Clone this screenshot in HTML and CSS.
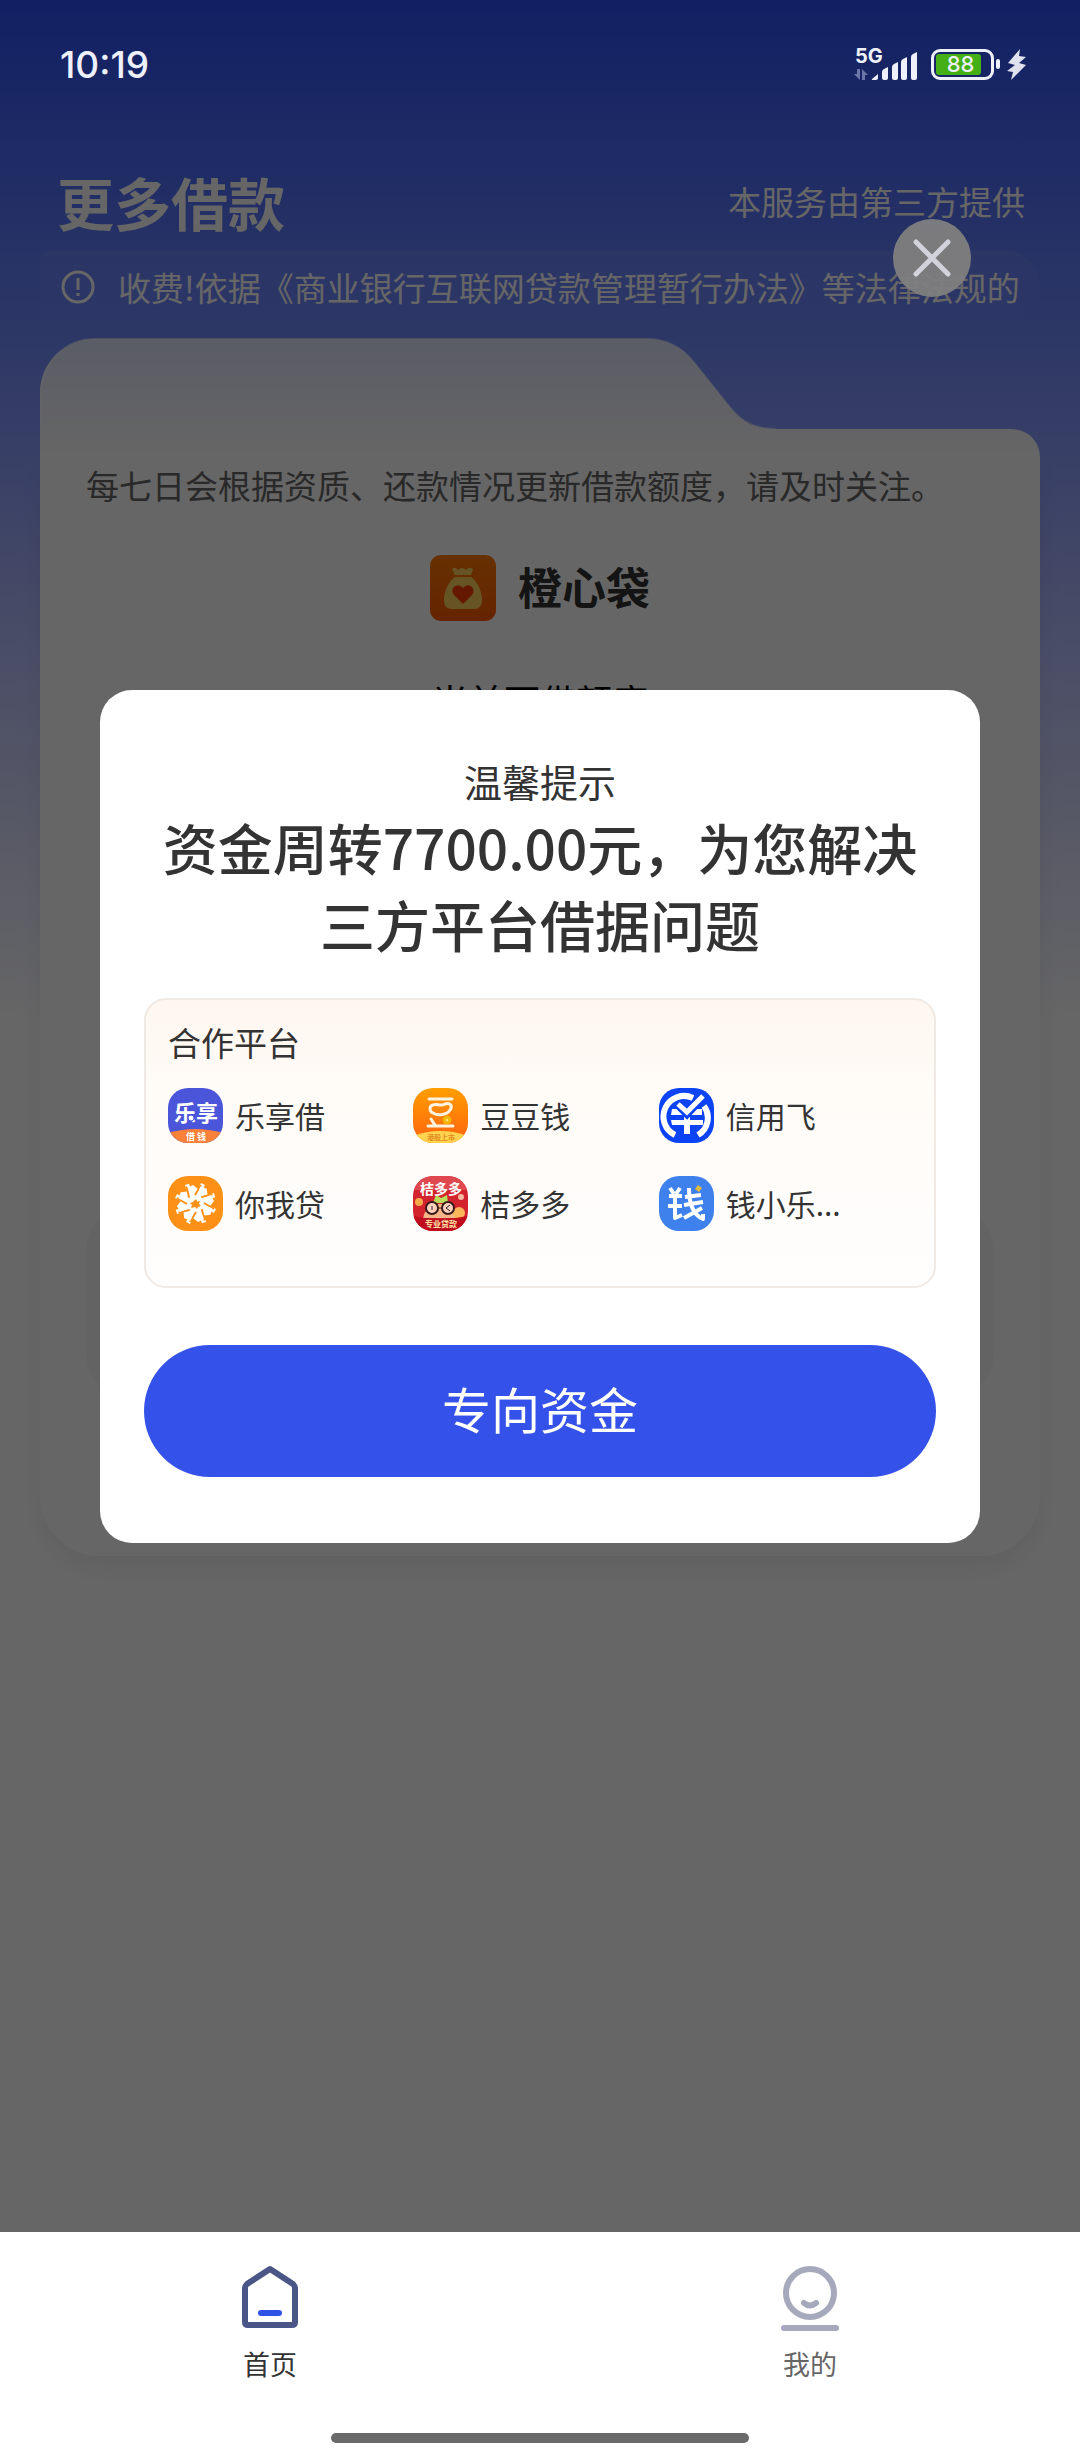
FILE: index.html
```html
<!DOCTYPE html>
<html lang="zh-CN">
<head>
    <meta charset="utf-8">
    <meta name="viewport" content="width=device-width, initial-scale=1">
    <title>更多借款</title>
    <link rel="stylesheet" href="styles.css">
</head>
<body>
    <main class="home">
        <div class="status">
            <span class="time">10:19</span>
            <div class="status-icons">
                <svg class="signal" width="64" height="46" viewBox="0 -6 64 46">
                    <text x="1" y="16" class="net">5G</text>
                    <g fill="#6d76a8">
                        <path d="M3 22h3v11L0 27h3zM8 33V22l6 6h-3v5z"/>
                    </g>
                    <g fill="#eef0fb">
                        <path d="M18 32l6-5v4q0 2-2 2h-3q-2 0-1-1z"/>
                        <path d="M28 25q0-2 2-3l4-2v11q0 2-2 2h-2q-2 0-2-2z"/>
                        <path d="M38 20q0-2 2-3l4-2v16q0 2-2 2h-2q-2 0-2-2z"/>
                        <path d="M47 15q0-2 2-3l4-2v21q0 2-2 2h-2q-2 0-2-2z"/>
                        <path d="M57 10q0-2 2-3l4-2v26q0 2-2 2h-2q-2 0-2-2z"/>
                    </g>
                </svg>
                <div class="battery"><span class="level">88</span></div>
                <span class="tip"></span>
                <svg class="bolt" width="19" height="31" viewBox="0 0 19 31">
                    <path d="M13 0L1 14l7 2-8 6 6 1-2 8 15-15-7-2 7-6-7-1z" fill="#dfe2ee"/>
                </svg>
            </div>
        </div>

        <div class="header">
            <h1 class="title">更多借款</h1>
            <span class="provider">本服务由第三方提供</span>
        </div>

        <div class="notice">
            <svg width="34" height="34" viewBox="0 0 34 34" fill="none" stroke="#fff" stroke-width="3">
                <circle cx="17" cy="17" r="15"/>
                <path d="M17 8v12M17 23v3"/>
            </svg>
            <p class="notice-text">收费!依据《商业银行互联网贷款管理暂行办法》等法律法规的注</p>
        </div>

        <div class="card">
            <svg class="card-top" viewBox="0 0 999 120" preserveAspectRatio="none">
                <defs>
                    <linearGradient id="tab" x1="0" y1="0" x2="0" y2="1">
                        <stop offset="0" stop-color="#fff" stop-opacity="0.78"/>
                        <stop offset="1" stop-color="#fff"/>
                    </linearGradient>
                </defs>
                <path d="M0 120V55C0 25 25 1 55 1H606C626 1 641 9 653 24L689 69C702 85 714 91 735 91H969C987 91 999 103 999 120z" fill="url(#tab)"/>
                <path d="M1 90V55C1 25 25 1 55 1H606C626 1 641 9 653 24L689 69C702 85 714 91 735 91" fill="none" stroke="#fff" stroke-opacity="0.5" stroke-width="2"/>
            </svg>
            <div class="card-body">
                <p class="tips">每七日会根据资质、还款情况更新借款额度，请及时关注。</p>
                <div class="product">
                    <svg width="66" height="66" viewBox="0 0 66 66">
                        <defs>
                            <linearGradient id="bag" x1="0" y1="0" x2="0" y2="1">
                                <stop offset="0" stop-color="#ff7a00"/>
                                <stop offset="1" stop-color="#ff5a00"/>
                            </linearGradient>
                        </defs>
                        <rect width="66" height="66" rx="11" fill="url(#bag)"/>
                        <path d="M22 14q3-3 6 1 4-4 8 0 3-4 7-1l-2 6H25z" fill="#ffd25c"/>
                        <path d="M25 22h16c7 5 11 15 11 23 0 6-3 9-8 9H22c-5 0-8-3-8-9 0-8 4-18 11-23z" fill="#ffd25c"/>
                        <path d="M33 49L24 40c-5-6 3-14 9-7 6-7 14 1 9 7z" fill="#fa3c00"/>
                    </svg>
                    <h2 class="product-name">橙心袋</h2>
                </div>
                <p class="quota">当前可借额度</p>
                <div class="panel"></div>
            </div>
        </div>

        <div class="overlay">
            <button class="close" type="button" aria-label="关闭">
                <svg width="40" height="40" viewBox="0 0 40 40" stroke="#d2d3da" stroke-width="5" stroke-linecap="round">
                    <path d="M4 4l32 32M36 4L4 36"/>
                </svg>
            </button>

            <div class="modal" role="dialog" aria-labelledby="modal-title">
                <p class="modal-title" id="modal-title">温馨提示</p>
                <h2 class="modal-text">资金周转7700.00元，为您解决三方平台借据问题</h2>

                <div class="partners">
                    <h3 class="partners-title">合作平台</h3>
                    <ul class="partners-list">
                        <li>
                            <svg class="logo" viewBox="0 0 55 55">
                                <rect width="55" height="55" fill="#4a55da"/>
                                <path d="M0 45Q27 37 55 45v10H0z" fill="#f9813a"/>
                                <text x="28" y="33" class="mark white" font-size="22">乐享</text>
                                <circle cx="23" cy="30" r="3" fill="#fff" stroke="#4a55da"/>
                                <text x="28" y="52" class="mark white" font-size="9">借 钱</text>
                            </svg>
                            <span>乐享借</span>
                        </li>
                        <li>
                            <svg class="logo" viewBox="0 0 55 55">
                                <defs>
                                    <linearGradient id="bean" x1="0" y1="0" x2="0" y2="1">
                                        <stop offset="0" stop-color="#ff9e00"/>
                                        <stop offset="1" stop-color="#ff6210"/>
                                    </linearGradient>
                                </defs>
                                <rect width="55" height="55" fill="url(#bean)"/>
                                <path d="M0 48Q27 38 55 48v7H0z" fill="#ffd34d"/>
                                <g fill="none" stroke="#fff3e0" stroke-width="3" stroke-linecap="round">
                                    <path d="M16 11h23M15 38h25M18 31l4 6"/>
                                    <path d="M20 17c4-2 7 2 12-1 5-2 8 2 5 6-3 5-12 6-17 3-4-2-4-7 0-8z"/>
                                </g>
                                <circle cx="34" cy="32" r="3" fill="#ffe27a" stroke="#f2b400" stroke-width="3"/>
                                <text x="28" y="52" class="mark" font-size="7" fill="#e08a1e">港股上市</text>
                            </svg>
                            <span>豆豆钱</span>
                        </li>
                        <li>
                            <svg class="logo" viewBox="0 0 55 55">
                                <rect width="55" height="55" fill="#0b43f5"/>
                                <path d="M16 47A20 20 0 0 1 34 10M45 18A20 20 0 0 1 39 47" fill="none" stroke="#fff" stroke-width="6"/>
                                <path d="M13 21h30v6H12zM12 32h32v5H13z" fill="#fff"/>
                                <path d="M25 25h6v21h-6z" fill="#fff"/>
                                <path d="M19 17l9 9 17-18" fill="none" stroke="#0b43f5" stroke-width="8"/>
                                <path d="M19 16l9 8 16-16" fill="none" stroke="#fff" stroke-width="5"/>
                            </svg>
                            <span>信用飞</span>
                        </li>
                        <li>
                            <svg class="logo" viewBox="0 0 55 55">
                                <rect width="55" height="55" fill="#fd9017"/>
                                <g id="half">
                                    <g id="petal">
                                        <path d="M24 24L19 12l6-3 5 4 3-6 4 2-9 16z" fill="#fff"/>
                                        <path d="M33 9l-6 10" stroke="#fd9017" stroke-width="2"/>
                                    </g>
                                    <use href="#petal" transform="rotate(45 27.500 27.500)"/>
                                    <use href="#petal" transform="rotate(90 27.500 27.500)"/>
                                    <use href="#petal" transform="rotate(135 27.500 27.500)"/>
                                </g>
                                <use href="#half" transform="rotate(180 27.500 27.500)"/>
                                <path d="M28 23l1 3 3-1-1 3 2 2-3 1-1 2-2-2-4 1 1-3-2-2 3-1z" fill="#fd9017"/>
                            </svg>
                            <span>你我贷</span>
                        </li>
                        <li>
                            <svg class="logo" viewBox="0 0 55 55">
                                <rect width="55" height="55" fill="#d2232f"/>
                                <path d="M0 0h55v14H0z" fill="#e0484f"/>
                                <path d="M10 42q2-11 14-14h8q10 3 13 14z" fill="#f7b58a"/>
                                <circle cx="6" cy="26" r="4" fill="#f7a94e"/>
                                <circle cx="46" cy="37" r="6" fill="#fbb65c"/>
                                <circle cx="48" cy="21" r="3" fill="#f9b9a0"/>
                                <path d="M20 27l3-8 5 3 6-3 1 8z" fill="#b9dc5a"/>
                                <path d="M0 40q27 6 55 0v15H0z" fill="#bf0f1e"/>
                                <g fill="#fdd3c0" stroke="#3a1a18" stroke-width="2">
                                    <circle cx="19" cy="32" r="6"/>
                                    <circle cx="35" cy="32" r="6"/>
                                    <path d="M25 32h4M19 30v4M37 29l-4 3 4 3" fill="none" stroke-width="1"/>
                                </g>
                                <text x="28" y="18" class="mark white" font-size="14">桔多多</text>
                                <text x="28" y="51" class="mark" font-size="8" fill="#ffe6a8">专业贷款</text>
                            </svg>
                            <span>桔多多</span>
                        </li>
                        <li>
                            <svg class="logo" viewBox="0 0 55 55">
                                <rect width="55" height="55" fill="#3e80ec"/>
                                <g fill="none" stroke="#fff" stroke-width="4" stroke-linejoin="round">
                                    <path d="M11 12l4 6M21 12l-4 6M10 20h13M9 30h14M16 19v23l7-3"/>
                                    <path d="M30 12c0 12 2 26 14 31v-5M26 21l16-2M25 29l19-3M43 32L25 42"/>
                                </g>
                                <path d="M39 9l4 3-3 4-4-3z" fill="#e6b93a"/>
                            </svg>
                            <span>钱小乐...</span>
                        </li>
                    </ul>
                </div>

                <button class="submit" type="button">专向资金</button>
            </div>
        </div>
    </main>

    <nav class="tabbar">
        <div class="tabs">
            <a href="#home" class="tab active">
                <svg width="60" height="68" viewBox="0 0 60 68" fill="none" stroke-linejoin="round">
                    <path d="M5 24Q5 22 7 20L30 5 53 20Q55 22 55 24V58Q55 61 52 61H8Q5 61 5 58z" stroke="#4a5685" stroke-width="6"/>
                    <path d="M21 49h18" stroke="#2f53e6" stroke-width="6" stroke-linecap="round"/>
                </svg>
                <span>首页</span>
            </a>
            <a href="#mine" class="tab">
                <svg width="60" height="68" viewBox="0 0 60 68" fill="none" stroke="#a5a9bb" stroke-width="6" stroke-linecap="round">
                    <circle cx="30" cy="29" r="24"/>
                    <path d="M24 39q6 5 12 0M4 64h52"/>
                </svg>
                <span>我的</span>
            </a>
        </div>
        <div class="indicator"></div>
    </nav>
</body>
</html>
```
FILE: styles.css
```css
* {
    box-sizing: border-box;
}
body {
    margin: 0;
    min-height: 100vh;
    display: flex;
    flex-direction: column;
    font-family: "Noto Sans CJK SC", sans-serif;
    color: #333;
    background-color: #fff;
}
h1, h2, h3, p, ul {
    margin: 0;
    padding: 0;
}
button {
    font-family: inherit;
    border: none;
    cursor: pointer;
}
.home {
    position: relative;
    flex: 1;
    background: linear-gradient(#2d50f8 0, #738cff 340px, #c3c9ff 700px, #fff 1020px);
}

/* status bar */
.status {
    position: relative;
    z-index: 2;
    display: flex;
    justify-content: space-between;
    align-items: center;
    height: 128px;
    padding: 0 54px 0 60px;
    color: #eef0fb;
}
.time {
    font-family: Inter, sans-serif;
    font-size: 37px;
    font-weight: 500;
}
.status-icons {
    display: flex;
    align-items: center;
}
.net {
    font-family: Inter, sans-serif;
    font-size: 20px;
    font-weight: 700;
    fill: #eef0fb;
}
.battery {
    width: 63px;
    height: 31px;
    margin-left: 13px;
    padding: 2px;
    border: 3px solid #eef0fb;
    border-radius: 9px;
}
.level {
    display: block;
    width: 45px;
    height: 21px;
    padding-left: 4px;
    background-color: #45b016;
    border-radius: 3px;
    font-family: Inter, sans-serif;
    font-size: 22px;
    font-weight: 500;
    line-height: 21px;
    text-align: center;
}
.tip {
    width: 4px;
    height: 10px;
    margin: 0 7px 0 2px;
    border-radius: 2px;
    background-color: #eef0fb;
}

/* header */
.header {
    display: flex;
    justify-content: space-between;
    align-items: center;
    height: 80px;
    margin: 33px 55px 9px 57px;
    color: #fff;
}
.title {
    font-size: 57px;
    font-weight: 700;
    line-height: 80px;
}
.provider {
    font-size: 33px;
    line-height: 48px;
}
.notice {
    display: flex;
    align-items: center;
    gap: 23px;
    height: 74px;
    margin: 0 40px 14px;
    padding: 0 19px 0 21px;
    border-radius: 12px 38px 38px 12px;
    background: linear-gradient(rgba(255, 255, 255, 0.08), rgba(255, 255, 255, 0));
    color: #fff;
}
.notice svg {
    flex: none;
}
.notice-text {
    flex: 1;
    overflow: hidden;
    white-space: nowrap;
    font-size: 33px;
    line-height: 48px;
}

/* loan card */
.card {
    margin: 0 40px;
}
.card-top {
    display: block;
    width: 100%;
    height: 120px;
}
.card-body {
    height: 1098px;
    padding: 0 46px;
    background-color: #fff;
    border-radius: 0 0 60px 60px;
    box-shadow: 0 12px 24px rgba(0, 0, 0, 0.06);
}
.tips {
    font-size: 33px;
    line-height: 54px;
    color: #666;
}
.product {
    display: flex;
    justify-content: center;
    align-items: center;
    gap: 22px;
    margin-top: 43px;
}
.product-name {
    font-size: 44px;
    line-height: 62px;
    padding-bottom: 4px;
}
.quota {
    margin-top: 52px;
    text-align: center;
    font-size: 36px;
    line-height: 54px;
    color: #000;
}
.panel {
    height: 190px;
    margin-top: 480px;
    border-radius: 44px;
    background-color: #f8f8f8;
}

/* popup */
.overlay {
    position: absolute;
    inset: 0;
    display: flex;
    justify-content: center;
    align-items: center;
    padding: 0 100px;
    background-color: rgba(0, 0, 0, 0.6);
}
.close {
    position: absolute;
    top: 219px;
    right: 109px;
    display: flex;
    justify-content: center;
    align-items: center;
    width: 78px;
    height: 78px;
    padding: 0;
    border-radius: 50%;
    background-color: rgba(128, 128, 128, 0.95);
}
.modal {
    flex: 1;
    padding: 64px 44px 66px;
    border-radius: 32px;
    background-color: #fff;
    text-align: center;
}
.modal-title {
    font-size: 38px;
    line-height: 54px;
}
.modal-text {
    font-size: 55px;
    font-weight: 500;
    line-height: 77px;
}
.partners {
    height: 290px;
    margin: 36px 0 57px;
    padding: 18px 30px 0 22px;
    border: 2px solid #f0e9e4;
    border-radius: 22px;
    background: linear-gradient(#fff6f0, #fffbf7 30%, #fffefd);
    text-align: left;
}
.partners-title {
    font-size: 33px;
    font-weight: 400;
    line-height: 48px;
}
.partners-list {
    display: grid;
    grid-template-columns: repeat(3, 1fr);
    row-gap: 33px;
    margin-top: 22px;
    list-style: none;
}
.partners-list li {
    display: flex;
    align-items: center;
    gap: 12px;
    height: 55px;
    font-size: 30px;
}
.logo {
    width: 55px;
    height: 55px;
    border-radius: 20px;
}
.mark {
    font-weight: 700;
    text-anchor: middle;
}
.white {
    fill: #fff;
}
.submit {
    display: block;
    width: 100%;
    height: 132px;
    padding: 0 0 6px;
    border-radius: 66px;
    background-color: #3452ea;
    color: #fff;
    font-size: 49px;
}

/* bottom tabs */
.tabbar {
    height: 228px;
    padding-top: 32px;
    background-color: #fff;
}
.tabs {
    display: flex;
}
.tab {
    flex: 1;
    display: flex;
    flex-direction: column;
    align-items: center;
    gap: 12px;
    color: #666;
    font-size: 27px;
    line-height: 40px;
    text-decoration: none;
}
.active {
    color: #333;
}
.indicator {
    width: 418px;
    height: 10px;
    margin: 49px auto 0;
    border-radius: 5px;
    background-color: #6a6a6a;
}
```
